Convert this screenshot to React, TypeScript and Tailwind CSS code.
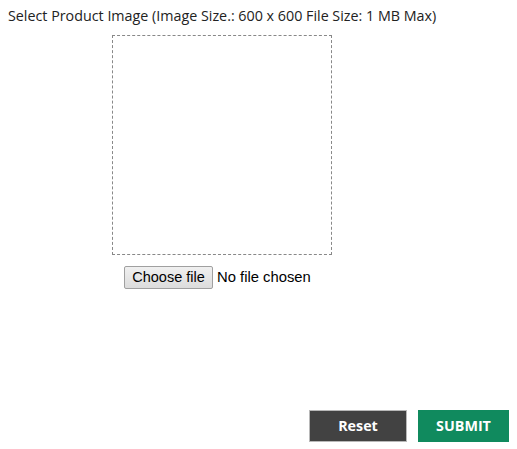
export default function App() {
  return (
    <div className="w-[517px] h-[449px] bg-white relative" style={{ fontFamily: '"Open Sans", sans-serif' }}>
      <div className="px-[8px] pt-[6px]">
        <p className="text-[14.3px] leading-[20px] text-[#222]">Select Product Image (Image Size.: 600 x 600 File Size: 1 MB Max)</p>
        <div className="ml-[104px] w-[220px] mt-[9px]">
          <div className="w-[220px] h-[220px] border border-dashed border-[#888]"></div>
          <div className="flex items-center justify-start pl-[12px] mt-[11px]" style={{ fontFamily: '"Liberation Sans", Arial, sans-serif' }}>
            <button className="h-[23px] w-[89px] text-[14.5px] text-black border border-[#a0a0a0] rounded-[2px] bg-gradient-to-b from-[#f0f0f0] to-[#dcdcdc] leading-none">Choose file</button>
            <span className="ml-[4px] text-[14.8px] text-black">No file chosen</span>
          </div>
        </div>
        <div className="flex justify-end gap-[11px] mt-[121px]">
          <button className="w-[98px] h-[32px] bg-[#424242] border border-[#b8b8b8] text-white font-bold text-[14.3px] leading-none">Reset</button>
          <button className="w-[91px] h-[32px] bg-[#108a5e] text-white font-bold text-[14.3px] leading-none">SUBMIT</button>
        </div>
      </div>
    </div>
  );
}
